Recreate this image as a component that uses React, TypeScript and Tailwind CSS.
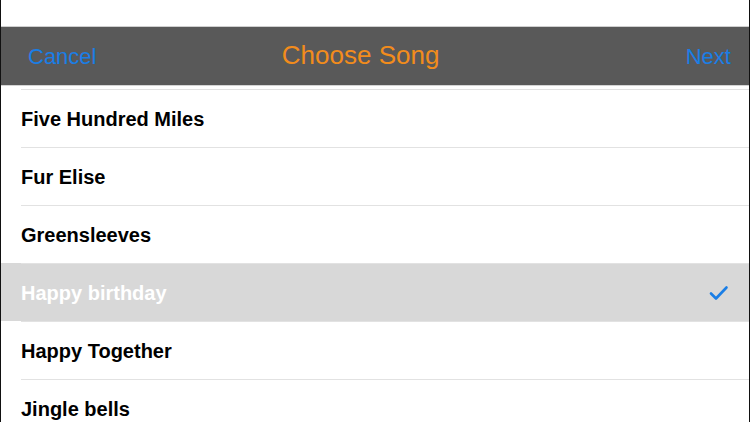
const songs = [
  'Five Hundred Miles',
  'Fur Elise',
  'Greensleeves',
  'Happy birthday',
  'Happy Together',
  'Jingle bells',
];

const selected = 'Happy birthday';

const App = () => {
  return (
    <div className="w-[750px] h-[422px] overflow-hidden bg-white border-l border-r border-[#111] font-['Liberation_Sans',Arial,sans-serif]">
      <div className="h-[27px] border-b border-[#cfcfcf]" />
      <div className="h-[59px] bg-[#595959] flex items-center justify-between pl-[27px] pr-[18px] border-b border-[#d4d4d4]">
        <span className="text-[22px] text-[#1a7ee6] mt-[1px]">Cancel</span>
        <span className="text-[26px] text-[#f28c1c] mr-[61px] mb-[1px]">Choose Song</span>
        <span className="text-[22px] text-[#1a7ee6] mt-[1px]">Next</span>
      </div>
      <div className="h-[3px]" />
      <div>
        {songs.map((song) => {
          const active = song === selected;
          return (
            <div key={song} className={active ? 'bg-[#d8d8d8]' : ''}>
              <div className="ml-5 h-px bg-[#e2e2e2]" />
              <div className="h-[57px] flex items-center justify-between pl-5 pr-[20px]">
                <span
                  className={`text-[20px] font-bold ${active ? 'text-white' : 'text-black'}`}
                >
                  {song}
                </span>
                {active && (
                  <svg width="20" height="16" viewBox="0 0 20 16">
                    <path
                      d="M2 8.5 L7 13.5 L17.5 2.5"
                      fill="none"
                      stroke="#1a7ee6"
                      strokeWidth="2.6"
                      strokeLinecap="round"
                      strokeLinejoin="round"
                    />
                  </svg>
                )}
              </div>
            </div>
          );
        })}
      </div>
    </div>
  );
};

export default App;
